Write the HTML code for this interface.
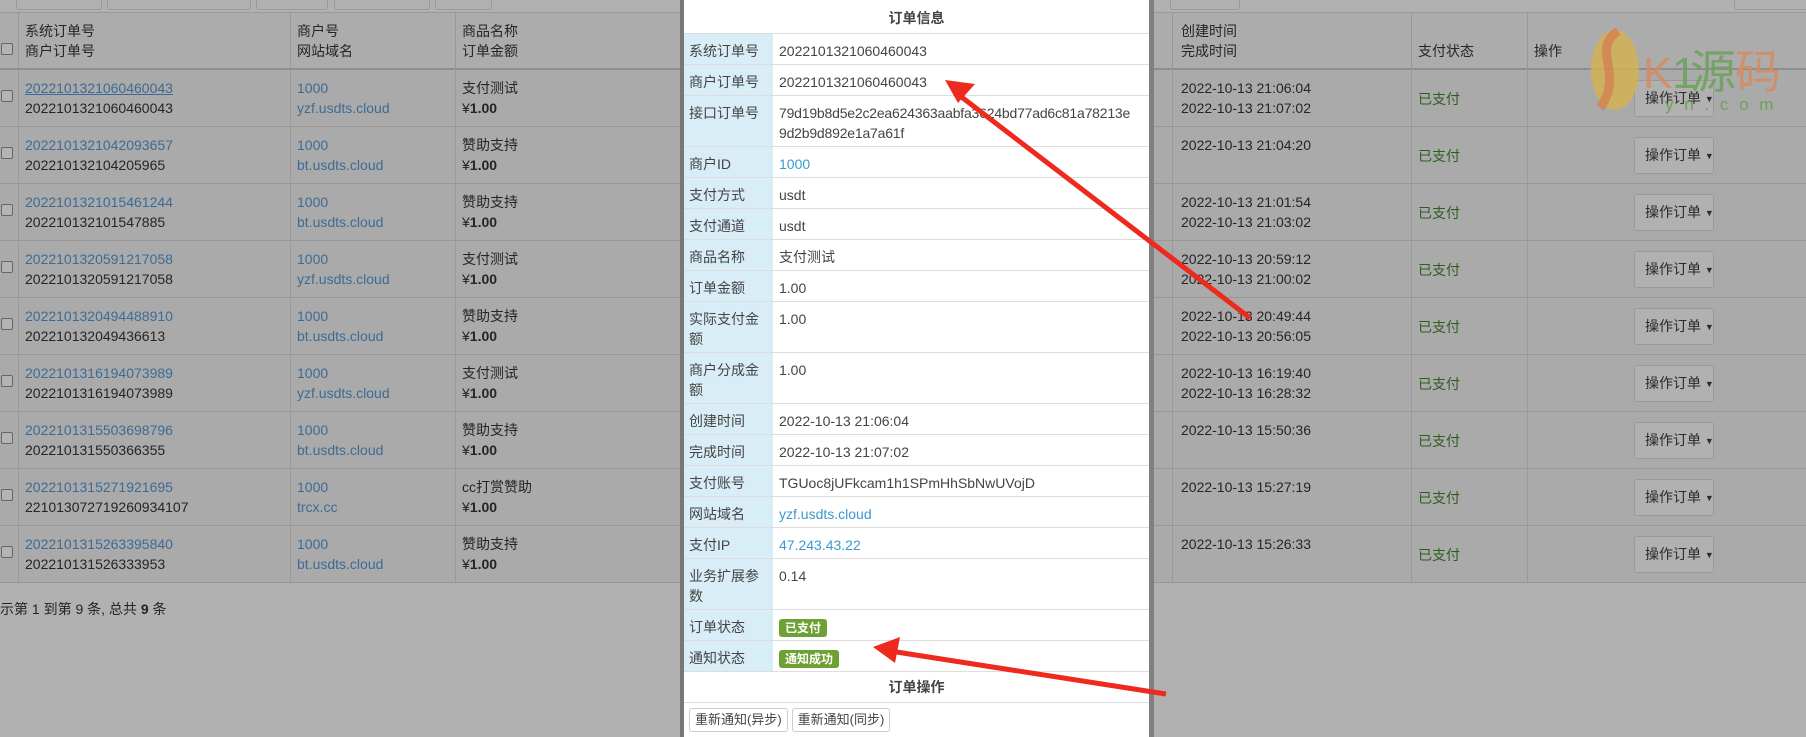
<!DOCTYPE html>
<html><head><meta charset="utf-8"><style>
*{margin:0;padding:0;box-sizing:border-box}
body{width:1806px;height:737px;overflow:hidden;background:#b1b1b1;font-family:"Liberation Sans","Noto Sans CJK SC",sans-serif;font-size:14px;color:#252525;position:relative}
.a{position:absolute}
.row{position:absolute;left:0;width:1806px;height:57px;background:#aaaaaa;border-bottom:1px solid #979797}
.vl{position:absolute;top:12px;height:570px;width:1px;background:#999}
.t{position:absolute;line-height:20px;white-space:nowrap}
.lk{color:#3d6b94}
.gr{color:#2c5e1e}
.cb{position:absolute;left:1px;width:12px;height:12px;border:1px solid #666;border-radius:2px;background:#b4b4b4}
.btn{position:absolute;left:1634px;width:80px;height:37px;border:1px solid #999;border-radius:3px;background:#b1b1b1;font-size:14px;line-height:35px;padding-left:10px;color:#2a2a2a;white-space:nowrap}
.btn i{font-style:normal;font-size:9px;vertical-align:1px}
.modal{position:absolute;left:680px;top:0;width:474px;height:737px;background:#fff;border-left:4px solid #777;border-right:5px solid #808080}
.mr{position:absolute;left:0;width:465px;border-bottom:1px solid #ddd;display:flex}
.ml{width:89px;flex:none;background:#d9edf7;padding:7px 8px 0 5px;line-height:20px;color:#444}
.mv{flex:1;padding:7px 0 0 6px;line-height:20px;color:#444;white-space:nowrap}
.badge{display:inline-block;background:#6ea133;color:#fff;font-size:12px;font-weight:bold;padding:0 6px;line-height:18px;border-radius:3px}
.mb{display:inline-block;border:1px solid #ccc;border-radius:3px;padding:0 5px;line-height:22px;font-size:13px;color:#444;background:#fff;margin-right:4px}
</style></head><body>
<div class="a" style="left:16px;top:-4px;width:86px;height:14px;border:1px solid #999;border-radius:3px"></div>
<div class="a" style="left:107px;top:-4px;width:144px;height:14px;border:1px solid #999;border-radius:3px"></div>
<div class="a" style="left:256px;top:-4px;width:72px;height:14px;border:1px solid #999;border-radius:3px"></div>
<div class="a" style="left:334px;top:-4px;width:96px;height:14px;border:1px solid #999;border-radius:3px"></div>
<div class="a" style="left:435px;top:-4px;width:57px;height:14px;border:1px solid #999;border-radius:3px"></div>
<div class="a" style="left:1170px;top:-4px;width:70px;height:14px;border:1px solid #999;border-radius:3px"></div>
<div class="a" style="left:1734px;top:-4px;width:80px;height:14px;border:1px solid #999;border-radius:3px"></div>
<div class="a" style="left:0;top:12px;width:1806px;height:1px;background:#999"></div>

<div class="row" style="top:70px"></div><div class="row" style="top:127px"></div><div class="row" style="top:184px"></div>
<div class="row" style="top:241px"></div><div class="row" style="top:298px"></div><div class="row" style="top:355px"></div>
<div class="row" style="top:412px"></div><div class="row" style="top:469px"></div><div class="row" style="top:526px"></div>
<div class="a" style="left:0;top:13px;width:1806px;height:55px;background:#acacac"></div>
<div class="a" style="left:0;top:68px;width:1806px;height:2px;background:#8e8e8e"></div>

<div class="vl" style="left:18px"></div><div class="vl" style="left:290px"></div><div class="vl" style="left:455px"></div>
<div class="vl" style="left:1172px"></div><div class="vl" style="left:1411px"></div><div class="vl" style="left:1527px"></div>

<div class="cb" style="top:43px"></div>
<div class="t" style="left:25px;top:21px">系统订单号<br>商户订单号</div>
<div class="t" style="left:297px;top:21px">商户号<br>网站域名</div>
<div class="t" style="left:462px;top:21px">商品名称<br>订单金额</div>
<div class="t" style="left:1181px;top:21px">创建时间<br>完成时间</div>
<div class="t" style="left:1418px;top:41px">支付状态</div>
<div class="t" style="left:1534px;top:41px">操作</div>

<div class="t" style="left:0;top:599px">示第 1 到第 9 条, 总共 <b>9</b> 条</div>

<div class="cb" style="top:90px"></div><div class="t" style="left:25px;top:78px"><span class="lk" style="text-decoration:underline">2022101321060460043</span><br>2022101321060460043</div><div class="t lk" style="left:297px;top:78px">1000<br>yzf.usdts.cloud</div><div class="t" style="left:462px;top:78px">支付测试<br>¥<b>1.00</b></div><div class="t" style="left:1181px;top:78px">2022-10-13 21:06:04<br>2022-10-13 21:07:02</div><div class="t gr" style="left:1418px;top:89px">已支付</div><div class="btn" style="top:80px">操作订单 <i>▼</i></div>
<div class="cb" style="top:147px"></div><div class="t" style="left:25px;top:135px"><span class="lk">2022101321042093657</span><br>202210132104205965</div><div class="t lk" style="left:297px;top:135px">1000<br>bt.usdts.cloud</div><div class="t" style="left:462px;top:135px">赞助支持<br>¥<b>1.00</b></div><div class="t" style="left:1181px;top:135px">2022-10-13 21:04:20</div><div class="t gr" style="left:1418px;top:146px">已支付</div><div class="btn" style="top:137px">操作订单 <i>▼</i></div>
<div class="cb" style="top:204px"></div><div class="t" style="left:25px;top:192px"><span class="lk">2022101321015461244</span><br>202210132101547885</div><div class="t lk" style="left:297px;top:192px">1000<br>bt.usdts.cloud</div><div class="t" style="left:462px;top:192px">赞助支持<br>¥<b>1.00</b></div><div class="t" style="left:1181px;top:192px">2022-10-13 21:01:54<br>2022-10-13 21:03:02</div><div class="t gr" style="left:1418px;top:203px">已支付</div><div class="btn" style="top:194px">操作订单 <i>▼</i></div>
<div class="cb" style="top:261px"></div><div class="t" style="left:25px;top:249px"><span class="lk">2022101320591217058</span><br>2022101320591217058</div><div class="t lk" style="left:297px;top:249px">1000<br>yzf.usdts.cloud</div><div class="t" style="left:462px;top:249px">支付测试<br>¥<b>1.00</b></div><div class="t" style="left:1181px;top:249px">2022-10-13 20:59:12<br>2022-10-13 21:00:02</div><div class="t gr" style="left:1418px;top:260px">已支付</div><div class="btn" style="top:251px">操作订单 <i>▼</i></div>
<div class="cb" style="top:318px"></div><div class="t" style="left:25px;top:306px"><span class="lk">2022101320494488910</span><br>202210132049436613</div><div class="t lk" style="left:297px;top:306px">1000<br>bt.usdts.cloud</div><div class="t" style="left:462px;top:306px">赞助支持<br>¥<b>1.00</b></div><div class="t" style="left:1181px;top:306px">2022-10-13 20:49:44<br>2022-10-13 20:56:05</div><div class="t gr" style="left:1418px;top:317px">已支付</div><div class="btn" style="top:308px">操作订单 <i>▼</i></div>
<div class="cb" style="top:375px"></div><div class="t" style="left:25px;top:363px"><span class="lk">2022101316194073989</span><br>2022101316194073989</div><div class="t lk" style="left:297px;top:363px">1000<br>yzf.usdts.cloud</div><div class="t" style="left:462px;top:363px">支付测试<br>¥<b>1.00</b></div><div class="t" style="left:1181px;top:363px">2022-10-13 16:19:40<br>2022-10-13 16:28:32</div><div class="t gr" style="left:1418px;top:374px">已支付</div><div class="btn" style="top:365px">操作订单 <i>▼</i></div>
<div class="cb" style="top:432px"></div><div class="t" style="left:25px;top:420px"><span class="lk">2022101315503698796</span><br>202210131550366355</div><div class="t lk" style="left:297px;top:420px">1000<br>bt.usdts.cloud</div><div class="t" style="left:462px;top:420px">赞助支持<br>¥<b>1.00</b></div><div class="t" style="left:1181px;top:420px">2022-10-13 15:50:36</div><div class="t gr" style="left:1418px;top:431px">已支付</div><div class="btn" style="top:422px">操作订单 <i>▼</i></div>
<div class="cb" style="top:489px"></div><div class="t" style="left:25px;top:477px"><span class="lk">2022101315271921695</span><br>221013072719260934107</div><div class="t lk" style="left:297px;top:477px">1000<br>trcx.cc</div><div class="t" style="left:462px;top:477px">cc打赏赞助<br>¥<b>1.00</b></div><div class="t" style="left:1181px;top:477px">2022-10-13 15:27:19</div><div class="t gr" style="left:1418px;top:488px">已支付</div><div class="btn" style="top:479px">操作订单 <i>▼</i></div>
<div class="cb" style="top:546px"></div><div class="t" style="left:25px;top:534px"><span class="lk">2022101315263395840</span><br>202210131526333953</div><div class="t lk" style="left:297px;top:534px">1000<br>bt.usdts.cloud</div><div class="t" style="left:462px;top:534px">赞助支持<br>¥<b>1.00</b></div><div class="t" style="left:1181px;top:534px">2022-10-13 15:26:33</div><div class="t gr" style="left:1418px;top:545px">已支付</div><div class="btn" style="top:536px">操作订单 <i>▼</i></div>

<svg class="a" style="left:1570px;top:28px" width="236" height="90">
<ellipse cx="45" cy="42" rx="24" ry="40" fill="#d6b24e" opacity=".8"/>
<path d="M48 3 C20 22 55 45 30 80" stroke="#d67a50" stroke-width="9" fill="none" opacity=".7"/>
<text x="73" y="60" font-size="44" fill="#d98a60" opacity=".85" font-family="Liberation Sans,sans-serif">K</text>
<text x="102" y="60" font-size="44" fill="#6aa35a" opacity=".85" font-family="Liberation Sans,sans-serif">1</text>
<text x="120" y="60" font-size="46" fill="#6aa35a" opacity=".85" font-family="Noto Sans CJK SC,sans-serif">源</text>
<text x="165" y="60" font-size="46" fill="#d98a60" opacity=".85" font-family="Noto Sans CJK SC,sans-serif">码</text>
<text x="95" y="82" font-size="17" fill="#6aa35a" letter-spacing="3" font-family="Liberation Sans,sans-serif">y n . c o m</text>
</svg>

<div class="modal">
<div class="mr" style="top:0;height:34px;justify-content:center;font-weight:bold;color:#444;line-height:36px">订单信息</div>
<div class="mr" style="top:34px;height:31px"><div class="ml">系统订单号</div><div class="mv">2022101321060460043</div></div>
<div class="mr" style="top:65px;height:31px"><div class="ml">商户订单号</div><div class="mv">2022101321060460043</div></div>
<div class="mr" style="top:96px;height:51px"><div class="ml">接口订单号</div><div class="mv" style="letter-spacing:-0.2px">79d19b8d5e2c2ea624363aabfa3624bd77ad6c81a78213e<br>9d2b9d892e1a7a61f</div></div>
<div class="mr" style="top:147px;height:31px"><div class="ml">商户ID</div><div class="mv" style="color:#3a9ad0">1000</div></div>
<div class="mr" style="top:178px;height:31px"><div class="ml">支付方式</div><div class="mv">usdt</div></div>
<div class="mr" style="top:209px;height:31px"><div class="ml">支付通道</div><div class="mv">usdt</div></div>
<div class="mr" style="top:240px;height:31px"><div class="ml">商品名称</div><div class="mv">支付测试</div></div>
<div class="mr" style="top:271px;height:31px"><div class="ml">订单金额</div><div class="mv">1.00</div></div>
<div class="mr" style="top:302px;height:51px"><div class="ml">实际支付金<br>额</div><div class="mv">1.00</div></div>
<div class="mr" style="top:353px;height:51px"><div class="ml">商户分成金<br>额</div><div class="mv">1.00</div></div>
<div class="mr" style="top:404px;height:31px"><div class="ml">创建时间</div><div class="mv">2022-10-13 21:06:04</div></div>
<div class="mr" style="top:435px;height:31px"><div class="ml">完成时间</div><div class="mv">2022-10-13 21:07:02</div></div>
<div class="mr" style="top:466px;height:31px"><div class="ml">支付账号</div><div class="mv">TGUoc8jUFkcam1h1SPmHhSbNwUVojD</div></div>
<div class="mr" style="top:497px;height:31px"><div class="ml">网站域名</div><div class="mv" style="color:#3a9ad0">yzf.usdts.cloud</div></div>
<div class="mr" style="top:528px;height:31px"><div class="ml">支付IP</div><div class="mv" style="color:#3a9ad0">47.243.43.22</div></div>
<div class="mr" style="top:559px;height:51px"><div class="ml">业务扩展参<br>数</div><div class="mv">0.14</div></div>
<div class="mr" style="top:610px;height:31px"><div class="ml">订单状态</div><div class="mv"><span class="badge">已支付</span></div></div>
<div class="mr" style="top:641px;height:31px"><div class="ml">通知状态</div><div class="mv"><span class="badge">通知成功</span></div></div>
<div class="mr" style="top:672px;height:31px;justify-content:center;font-weight:bold;color:#444;line-height:30px">订单操作</div>
<div class="a" style="left:5px;top:708px"><span class="mb">重新通知(异步)</span><span class="mb">重新通知(同步)</span></div>
</div>

<svg class="a" style="left:0;top:0" width="1806" height="737">
<line x1="1250" y1="318" x2="955" y2="92" stroke="#ee2a1e" stroke-width="5"/>
<polygon points="945,80 975,84 958,103" fill="#ee2a1e"/>
<line x1="1166" y1="694" x2="890" y2="651" stroke="#ee2a1e" stroke-width="5"/>
<polygon points="873,647 900,637 895,663" fill="#ee2a1e"/>
</svg>
</body></html>
